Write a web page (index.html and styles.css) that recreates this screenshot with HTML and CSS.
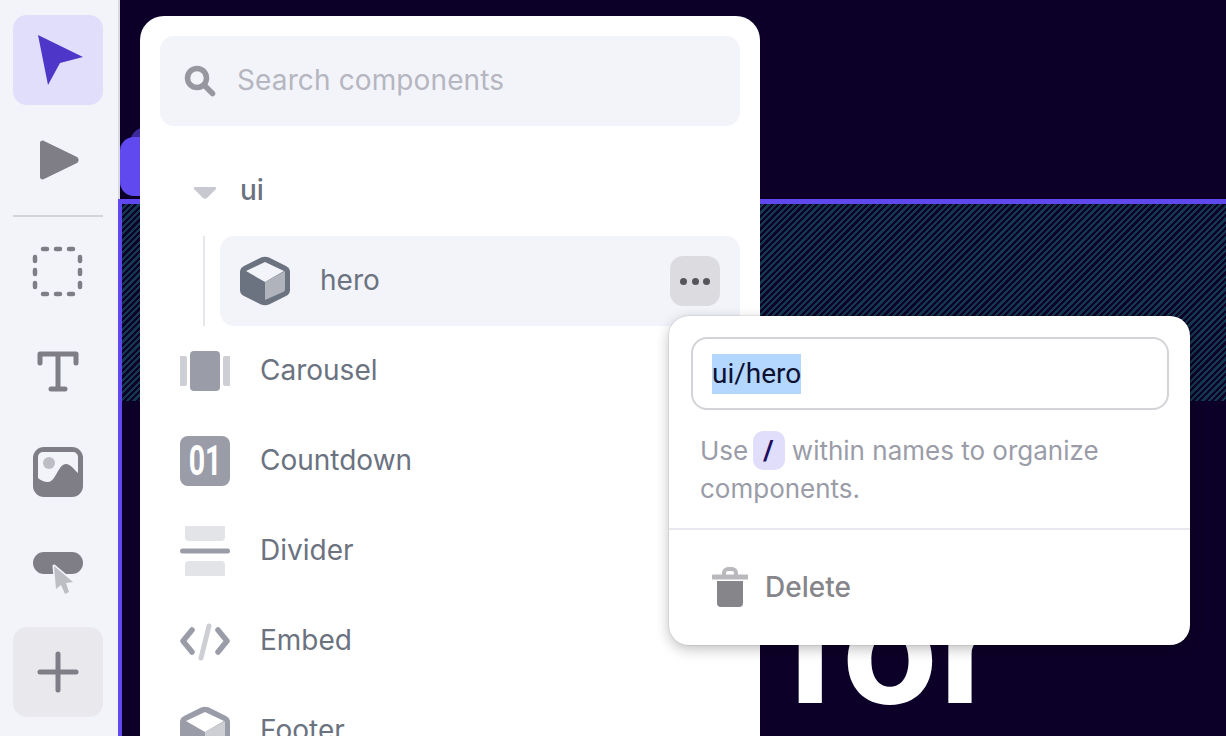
FILE: index.html
```html
<!DOCTYPE html>
<html lang="en">
<head>
<meta charset="utf-8">
<title>Components</title>
<link rel="stylesheet" href="styles.css">
</head>
<body>
<div class="app">
  <aside class="rail">
    <button class="tool tool-active">
      <svg width="90" height="90" viewBox="0 0 90 90"><path class="i-arrow" d="M25 20 70 42 47 48 35 70Z"/></svg>
    </button>
    <button class="tool">
      <svg width="90" height="90" viewBox="0 0 90 90"><path class="i-fill" d="M27 28c0-2 2-3 4-2l33 16c2 1 2 5 0 6L31 64c-2 1-4 0-4-2Z"/></svg>
    </button>
    <hr class="rail-sep">
    <button class="tool">
      <svg width="90" height="90" viewBox="0 0 90 90"><g class="i-dash"><path d="M30 22h4M43 22h4M56 22h4M30 67h4M43 67h4M56 67h4M22 30v4M22 43v4M22 56v4M67 30v4M67 43v4M67 56v4"/></g></svg>
    </button>
    <button class="tool">
      <svg width="90" height="90" viewBox="0 0 90 90"><path class="i-line" d="M27 36v-9h36v9M45 27v35M38 62h14"/></svg>
    </button>
    <button class="tool">
      <svg width="90" height="90" viewBox="0 0 90 90"><rect class="i-fill" x="20" y="20" width="50" height="50" rx="11"/><path class="i-paper" d="M30 25h30a5 5 0 0 1 5 5v16c-3-2-7-9-12-9-8 0-10 18-18 18-4 0-8-2-10-4V30a5 5 0 0 1 5-5Z"/><circle class="i-soft" cx="36" cy="36" r="6"/></svg>
    </button>
    <button class="tool">
      <svg width="90" height="90" viewBox="0 0 90 90"><rect class="i-fill" x="20" y="25" width="50" height="22" rx="11"/><path class="i-cursor" d="M41 39 60 55 53 56 56 65 52 67 48 58 43 62Z"/></svg>
    </button>
    <button class="tool tool-add">
      <svg width="90" height="90" viewBox="0 0 90 90"><path class="i-line" d="M27 45h36M45 27v36"/></svg>
    </button>
  </aside>

  <main class="canvas">
    <div class="pill-bump"></div>
    <div class="pill"></div>
    <section class="frame">
      <div class="hatch"></div>
      <div class="headline">for</div>
    </section>

    <section class="panel">
      <div class="search">
        <svg width="34" height="34" viewBox="0 0 34 34"><circle class="i-mag" cx="14" cy="14" r="9.500"/><path class="i-mag" d="M21.500 21.500l8 8"/></svg>
        <span>Search components</span>
      </div>
      <div class="tree-head">
        <svg class="caret" width="24" height="14" viewBox="0 0 24 14"><path d="M2 1h20c1 0 1.500 1 1 2L14 12c-1 1-3 1-4 0L1 3C.5 2 1 1 2 1Z"/></svg>
        <span>ui</span>
      </div>
      <div class="tree-child">
        <div class="guide"></div>
        <div class="hero-row">
          <svg width="50" height="50" viewBox="0 0 50 50"><path class="cube-d" d="M21 1.500Q25 0 29 1.500L46 10Q50 12 50 16V34Q50 38 46 40L29 48.500Q25 50 21 48.500L4 40Q0 38 0 34V16Q0 12 4 10Z"/><path class="cube-w" d="M25 6 44 15 25 26 6 15Z"/><path class="cube-l" d="M25 44V26l20-11v18c0 2-1 3-2 3Z"/></svg>
          <span class="row-label">hero</span>
          <div class="more"><i></i><i></i><i></i></div>
        </div>
      </div>
      <div class="row">
        <svg width="50" height="50" viewBox="0 0 50 50"><rect class="s-b" x="10" y="5" width="30" height="40" rx="4"/><path class="s-c" d="M0 10h5a2 2 0 0 1 2 2v26a2 2 0 0 1-2 2H0ZM50 10h-5a2 2 0 0 0-2 2v26a2 2 0 0 0 2 2h5Z"/></svg>
        <span class="row-label">Carousel</span>
      </div>
      <div class="row">
        <div class="count-icon"><span>01</span></div>
        <span class="row-label">Countdown</span>
      </div>
      <div class="row">
        <svg width="50" height="50" viewBox="0 0 50 50"><path class="s-d" d="M5 0h40v11a4 4 0 0 1-4 4H9a4 4 0 0 1-4-4ZM9 35h32a4 4 0 0 1 4 4v11H5V39a4 4 0 0 1 4-4Z"/><rect class="s-b" x="0" y="22.500" width="50" height="5" rx="2.500"/></svg>
        <span class="row-label">Divider</span>
      </div>
      <div class="row">
        <svg width="50" height="50" viewBox="0 0 50 50"><path class="st-b" d="M12 14 3 25l9 11M38 14l9 11-9 11"/><path class="st-c" d="M29 10 21 42"/></svg>
        <span class="row-label">Embed</span>
      </div>
      <div class="row">
        <svg width="50" height="50" viewBox="0 0 50 50"><path class="s-b" d="M21 1.500Q25 0 29 1.500L46 10Q50 12 50 16V34Q50 38 46 40L29 48.500Q25 50 21 48.500L4 40Q0 38 0 34V16Q0 12 4 10Z"/><path class="cube-wf" d="M25 6 44 15 25 26 6 15Z"/><path class="s-c" d="M25 44V26l20-11v18c0 2-1 3-2 3Z"/></svg>
        <span class="row-label">Footer</span>
      </div>
    </section>

    <section class="popover">
      <div class="name-field"><span class="selected">ui/hero</span></div>
      <p class="hint">Use <kbd>/</kbd> within names to organize components.</p>
      <div class="pop-sep"></div>
      <div class="delete">
        <svg width="36" height="40" viewBox="0 0 36 40"><path class="t-l" d="M1.500 10h33" /><path class="t-h" d="M12 9V6a4 4 0 0 1 4-4h4a4 4 0 0 1 4 4v3"/><path class="t-d" d="M5 14h26v22a4 4 0 0 1-4 4H9a4 4 0 0 1-4-4Z"/></svg>
        <span>Delete</span>
      </div>
    </section>
  </main>
</div>
</body>
</html>
```
FILE: styles.css
```css
* { box-sizing: border-box; }
html, body { margin: 0; height: 100%; overflow: hidden; }
body { font-family: Inter, Roboto, "Liberation Sans", sans-serif; background: #0d0028; }
.app { display: flex; width: 1226px; height: 736px; overflow: hidden; }

.rail { width: 120px; flex: none; background: #f3f4fa; border-right: 2px solid #d9d9e0; padding: 15px 15px 0 13px; display: flex; flex-direction: column; gap: 10px; }
.tool { width: 90px; height: 90px; padding: 0; border: 0; border-radius: 14px; background: none; display: block; flex: none; }
.tool svg { display: block; overflow: visible; }
.tool-active { background: #e1defb; }
.tool-add { background: #e9e9ed; }
.rail-sep { width: 90px; height: 2px; margin: 0; border: 0; background: #d3d3da; flex: none; }
.i-arrow { fill: #4e36c9; }
.i-fill { fill: #7f7e87; }
.i-paper { fill: #f3f4fa; }
.i-soft { fill: #bdbdc4; }
.i-cursor { fill: #bdbdc4; stroke: #f3f4fa; stroke-width: 3; stroke-linejoin: round; paint-order: stroke; }
.i-dash path { fill: none; stroke: #7f7e87; stroke-width: 4.500; stroke-linecap: round; }
.i-line { fill: none; stroke: #7f7e87; stroke-width: 5; stroke-linecap: round; stroke-linejoin: round; }

.canvas { position: relative; flex: 1; background: #0d0028; }
.pill-bump { position: absolute; left: 10px; top: 127px; width: 40px; height: 40px; border-radius: 16px; background: #3d2a9e; }
.pill { position: absolute; left: 0; top: 137px; width: 40px; height: 59px; border-radius: 14px; background: #6149f0; }
.frame { position: absolute; left: -2px; top: 199px; width: 1110px; height: 537px; overflow: hidden; border: solid #5f48ee; border-width: 5px 0 0 4px; }
.hatch { height: 197px; background: repeating-linear-gradient(135deg, #0d0028 0, #0d0028 2.250px, #13384f 2.250px, #13384f 4.500px); }
.headline { position: absolute; left: 660px; top: 342px; font: 700 158px/200px Inter, Roboto, sans-serif; color: #fff; }

.panel { position: absolute; left: 20px; top: 16px; width: 620px; height: 800px; padding: 20px; background: #fff; border-radius: 24px; }
.search { height: 90px; display: flex; align-items: center; gap: 20px; padding-left: 23px; border-radius: 14px; background: #f3f4fa; font-size: 28px; letter-spacing: .12px; color: #b5b6bf; }
.search span { position: relative; top: -1px; }
.search svg { display: block; flex: none; }
.i-mag { fill: none; stroke: #97979f; stroke-width: 5.500; stroke-linecap: round; }
.tree-head { height: 110px; padding-top: 18px; display: flex; align-items: center; gap: 23px; padding-left: 33px; font-size: 28px; font-weight: 500; color: #6b7280; }
.caret { fill: #c8c9d0; margin-top: 6px; }
.tree-child { display: flex; height: 90px; padding-left: 43px; gap: 15px; }
.guide { width: 2px; background: #e6e7eb; }
.hero-row { flex: 1; display: flex; align-items: center; gap: 30px; padding: 0 20px; background: #f3f4fa; border-radius: 14px; }
.hero-row svg, .row svg { display: block; flex: none; }
.row-label { font-size: 28px; color: #6b7280; position: relative; top: -1px; }
.hero-row .row-label { flex: 1; }
.more { width: 50px; height: 50px; border-radius: 13px; background: #dcdce0; display: flex; align-items: center; justify-content: center; gap: 4.500px; }
.more i { width: 7px; height: 7px; border-radius: 50%; background: #55555c; }
.cube-d { fill: #6b7280; }
.cube-w { fill: #f3f4fa; }
.cube-wf { fill: #fff; }
.cube-l { fill: #b0b3bb; }
.row { height: 90px; display: flex; align-items: center; gap: 30px; padding-left: 20px; }
.s-b { fill: #9a9da8; }
.s-c { fill: #cdcfd5; }
.s-d { fill: #e3e4e8; }
.st-b { fill: none; stroke: #9a9da8; stroke-width: 5.500; stroke-linecap: round; stroke-linejoin: round; }
.st-c { fill: none; stroke: #cdcfd5; stroke-width: 5; stroke-linecap: round; }
.count-icon { width: 50px; height: 50px; flex: none; border-radius: 8px; background: #9a9da8; display: flex; align-items: center; justify-content: center; color: #fff; font: 700 42px/50px Roboto, sans-serif; }
.count-icon span { display: block; transform: scaleX(.68); }

.popover { position: absolute; left: 549px; top: 316px; width: 521px; height: 329px; background: #fff; border-radius: 20px; box-shadow: 0 0 0 1px rgba(0,0,0,.06), 0 4px 14px rgba(0,0,0,.25); padding: 21px 0 0; }
.name-field { height: 73px; margin: 0 21px 0 22px; border: 2px solid #d3d3d8; border-radius: 16px; padding-left: 19px; display: flex; align-items: center; font-family: Roboto, sans-serif; font-size: 28px; color: #0d1030; }
.selected { background: #b4d7ff; line-height: 40px; }
.hint { margin: 21px 0 0; padding: 0 31px; font-size: 26px; line-height: 38px; color: #9a9ca8; }
kbd { display: inline-block; width: 32px; height: 39px; border-radius: 10px; background: #e1defb; color: #1d0f5e; font: 700 28px/39px Roboto, sans-serif; text-align: center; margin: 0 0 0 -3px; }
.pop-sep { height: 2px; background: #e8e8ee; margin-top: 20px; }
.delete { display: flex; align-items: center; gap: 17px; padding: 37px 0 0 43px; font-size: 28px; font-weight: 500; color: #85858a; }
.delete svg { display: block; flex: none; }
.t-l { fill: none; stroke: #b9b9bd; stroke-width: 5; stroke-linecap: round; }
.t-h { fill: none; stroke: #b9b9bd; stroke-width: 4; }
.t-d { fill: #85858a; }
```
